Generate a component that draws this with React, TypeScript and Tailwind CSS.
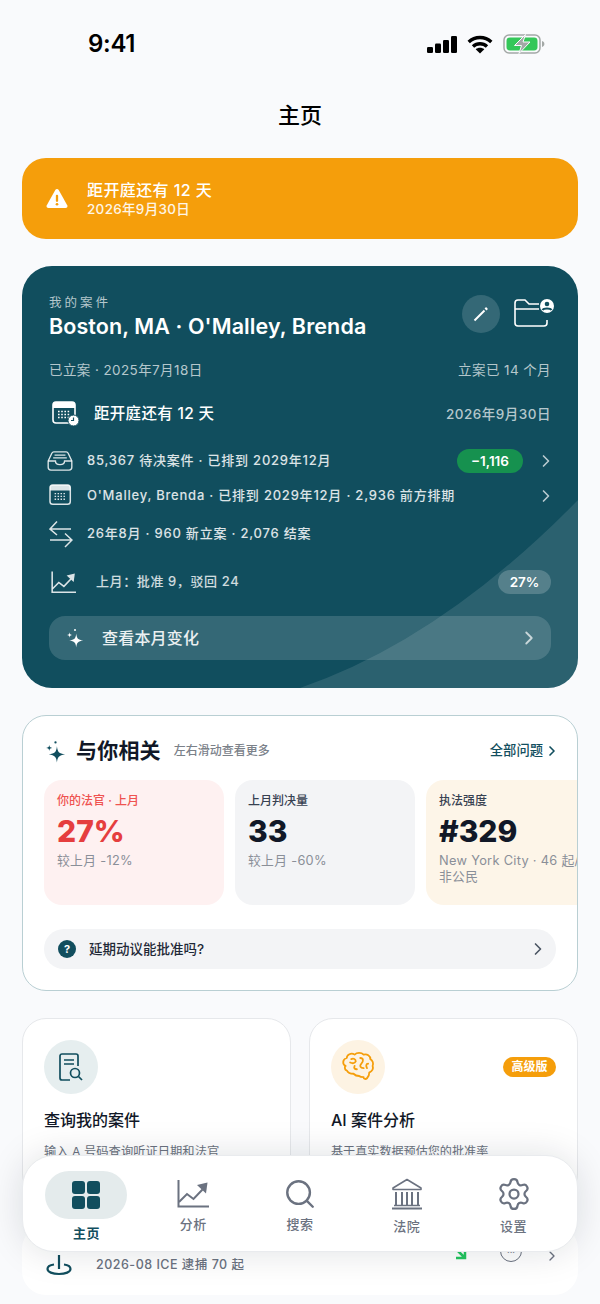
import React from "react";
import { ChevronRight, Search, Settings } from "lucide-react";

const Sparkle = ({ className }: { className?: string }) => (
  <svg viewBox="0 0 24 24" fill="currentColor" className={className}>
    <path d="M13.500 6.500C14.200 12.500 15.500 14.100 22 15 15.500 15.900 14.200 17.500 13.500 23.500 12.800 17.500 11.500 15.900 5 15 11.500 14.100 12.800 12.500 13.500 6.500Z" />
    <path d="M5.500 5c.3 2.400.8 3 3.300 3.300-2.500.3-3 .9-3.300 3.300-.3-2.400-.8-3-3.300-3.300 2.500-.3 3-.9 3.300-3.300Z" />
    <circle cx="12" cy="2.500" r="1.200" />
  </svg>
);

const TrendIcon = ({ className }: { className?: string }) => (
  <svg viewBox="0 0 32 28" fill="none" stroke="currentColor" strokeWidth="2" className={className}>
    <path d="M1.500 0v26.500H32" />
    <path d="M2 22l8-8 6.500 5 9-9.500" />
    <path d="M20 5l10.500-2.500L29 13.500Z" fill="currentColor" stroke="none" />
  </svg>
);

const CalendarIcon = ({ className, clock }: { className?: string; clock?: boolean }) => (
  <svg viewBox="0 0 28 26" fill="none" stroke="currentColor" className={className}>
    <rect x="1" y="1" width="22" height="21" rx="3" strokeWidth="1.600" />
    <path d="M1 4a3 3 0 0 1 3-3h16a3 3 0 0 1 3 3v3H1Z" fill="currentColor" stroke="none" />
    <path d="M6 10.500h12M6 13.500h12M6 16.500h12" strokeWidth="1.400" strokeDasharray="1.600 1.600" />
    {clock && <circle cx="21.500" cy="19.500" r="5.500" fill="currentColor" stroke="#134f5f" strokeWidth="1" />}
    {clock && <path d="M21.500 16.500v3h-2.500" stroke="#134f5f" strokeWidth="1.200" />}
  </svg>
);

const Row = ({ icon, text, right }: { icon: React.ReactNode; text: string; right?: React.ReactNode }) => (
  <div className="flex h-[24px] items-center">
    <div className="-ml-[3px] flex w-[41px] shrink-0">{icon}</div>
    <span className="text-[13px] font-medium tracking-[0.78px] text-white/85">{text}</span>
    {right && <div className="ml-auto flex items-center">{right}</div>}
  </div>
);

const Tile = ({
  bg,
  label,
  labelColor,
  value,
  valueColor,
  note,
}: {
  bg: string;
  label: string;
  labelColor: string;
  value: string;
  valueColor: string;
  note: React.ReactNode;
}) => (
  <div className={`h-[125px] w-[180px] shrink-0 rounded-[18px] px-[13px] pt-[13px] ${bg}`}>
    <div className={`text-[12px] font-medium leading-[16px] ${labelColor}`}>{label}</div>
    <div className={`mt-[3px] text-[30px] font-extrabold leading-[38px] ${valueColor}`}>{value}</div>
    <div className="mt-[3px] text-[12.800px] leading-[16px] tracking-[0.3px] text-[#8a8f98]">{note}</div>
  </div>
);

const NavItem = ({ icon, label, labelClass }: { icon: React.ReactNode; label: string; labelClass: string }) => (
  <div className="flex flex-1 flex-col items-center">
    <div className="flex h-[46px] items-center justify-center">{icon}</div>
    <span className={`text-[13px] font-medium leading-[16px] tracking-[0.5px] text-[#6b7280] ${labelClass}`}>{label}</span>
  </div>
);

export default function App() {
  return (
    <div className="relative h-[1304px] w-[600px] overflow-hidden bg-[#f9fafc] font-['Inter','Noto_Sans_CJK_SC',sans-serif] text-[#111827]">
      {/* status bar */}
      <div className="flex h-[88px] items-center justify-between pl-[88px] pr-[55px]">
        <span className="text-[24px] font-semibold tracking-[-0.3px] text-black">9:41</span>
        <div className="flex items-center gap-[10px]">
          <svg viewBox="0 0 30 17" className="h-[17px] w-[30px]" fill="black">
            <rect x="0" y="11" width="6" height="6" rx="1.300" />
            <rect x="8" y="7.500" width="6" height="9.500" rx="1.300" />
            <rect x="16" y="4" width="6" height="13" rx="1.300" />
            <rect x="24" y="0" width="6" height="17" rx="1.300" />
          </svg>
          <svg viewBox="0 0 26 19" className="h-[19px] w-[26px]" fill="none" stroke="black" strokeWidth="3.400">
            <path d="M1.700 7C8 1 18 1 24.300 7" />
            <path d="M6 11.500c4-3.700 10-3.700 14 0" />
            <path d="M13 18.500l4.300-4.200c-2.400-2-6.200-2-8.600 0Z" fill="black" stroke="none" />
          </svg>
          <svg viewBox="0 0 42 20" className="h-[20px] w-[42px]">
            <rect x="1" y="1" width="36" height="18" rx="5" fill="none" stroke="#a3a8a6" strokeWidth="1.500" />
            <rect x="3.500" y="3.500" width="31" height="13" rx="3.400" fill="#34c759" />
            <path d="M39 7v6c1.500-.4 2.400-1.600 2.400-3S40.500 7.400 39 7Z" fill="#a3a8a6" />
            <path d="M22.500 0.500L11.500 11.500h7L16 19.500l11-11.500h-7Z" fill="#a3a8a6" stroke="#f9fafc" strokeWidth="1" />
          </svg>
        </div>
      </div>

      <div className="flex h-[54px] items-center justify-center text-[22px] font-medium text-black">主页</div>

      <div className="mx-[22px] mt-[16px] flex h-[81px] items-center rounded-[24px] bg-[#f59e0b] pl-[23px] text-white">
        <svg viewBox="0 0 24 22" className="h-[21px] w-[24px]" fill="white">
          <path d="M12 1c.8 0 1.400.4 1.800 1.100l8.900 15.900c.8 1.500-.2 3-1.800 3H3.100c-1.600 0-2.600-1.500-1.800-3l8.900-15.900C10.600 1.400 11.200 1 12 1Z" />
          <rect x="10.800" y="7" width="2.400" height="7.500" rx="1" fill="#f59e0b" />
          <circle cx="12" cy="17" r="1.400" fill="#f59e0b" />
        </svg>
        <div className="ml-[18px]">
          <div className="text-[16px] font-medium leading-[20px] tracking-[0.4px]">距开庭还有 12 天</div>
          <div className="text-[13.500px] font-medium leading-[18px] tracking-[0.3px] text-white/90">2026年9月30日</div>
        </div>
      </div>

      {/* case card */}
      <div className="relative mx-[22px] mt-[27px] h-[422px] overflow-hidden rounded-[30px] bg-[#114e5e] px-[27px] text-white">
        <svg viewBox="0 0 556 422" className="absolute inset-0 h-full w-full">
          <path d="M278 422Q419 374 556 234V422Z" fill="white" fillOpacity="0.11" />
        </svg>
        <div className="relative">
          <div className="flex h-[75px] items-end justify-between">
            <div>
              <div className="text-[12.500px] leading-[16px] tracking-[3px] text-white/70">我的案件</div>
              <div className="text-[21.500px] font-semibold leading-[30px] tracking-[0.1px]">Boston, MA · O'Malley, Brenda</div>
            </div>
            <div className="mb-[8px] flex items-start">
              <div className="flex h-[38px] w-[38px] items-center justify-center rounded-full bg-white/15">
                <svg viewBox="0 0 16 16" className="h-[16px] w-[16px]" fill="none" stroke="white" strokeWidth="2">
                  <path d="M1.500 14.500l10-10" />
                  <path d="M12.500 3.500l1.500-1.500" strokeWidth="2.600" />
                </svg>
              </div>
              <svg viewBox="0 0 40 28" fill="none" stroke="white" strokeWidth="1.600" className="-mr-[3px] ml-[14px] mt-[4px] h-[28px] w-[40px]">
                <path d="M33 21v3a3 3 0 0 1-3 3H4a3 3 0 0 1-3-3V4a3 3 0 0 1 3-3h7l4 4h10" />
                <path d="M1 10h24" />
                <circle cx="33" cy="7" r="7" fill="white" stroke="none" />
                <circle cx="33" cy="5" r="2.300" fill="#114e5e" stroke="none" />
                <path d="M28.500 11c1-2 8-2 9 0" stroke="#114e5e" strokeWidth="2" />
              </svg>
            </div>
          </div>

          <div className="mt-[19px] flex h-[20px] items-center justify-between text-[13.500px] tracking-[0.4px] text-white/70">
            <span>已立案 · 2025年7月18日</span>
            <span>立案已 14 个月</span>
          </div>

          <div className="mt-[21px] flex h-[26px] items-center">
            <CalendarIcon clock className="ml-[3px] h-[26px] w-[28px]" />
            <span className="ml-[14px] text-[15.500px] font-medium tracking-[0.3px]">距开庭还有 12 天</span>
            <span className="ml-auto text-[13.500px] font-medium tracking-[0.5px] text-white/70">2026年9月30日</span>
          </div>

          <div className="mt-[22px] flex flex-col gap-[11px]">
            <Row
              icon={
                <svg viewBox="0 0 28 22" fill="none" stroke="white" strokeOpacity="0.85" strokeWidth="1.500" className="h-[20px] w-[28px]">
                  <path d="M1 11l4-8.500C5.500 1.500 6.200 1 7.200 1h13.600c1 0 1.700.5 2.200 1.500L27 11v7a3 3 0 0 1-3 3H4a3 3 0 0 1-3-3Z" />
                  <path d="M1 11h8c0 2.500 2 4 5 4s5-1.500 5-4h8M8 4.500h12M6.500 7.500h15" />
                </svg>
              }
              text="85,367 待决案件 · 已排到 2029年12月"
              right={
                <>
                  <span className="flex h-[24px] w-[66px] items-center justify-center rounded-full bg-[#16914f] text-[13.500px] font-semibold">−1,116</span>
                  <ChevronRight className="ml-[13px] mr-[-5px] h-[20px] w-[20px] text-white/70" />
                </>
              }
            />
            <Row
              icon={<CalendarIcon className="ml-[3px] h-[24px] w-[26px] text-white/85" />}
              text="O'Malley, Brenda · 已排到 2029年12月 · 2,936 前方排期"
              right={<ChevronRight className="mr-[-5px] h-[20px] w-[20px] text-white/70" />}
            />
            <div className="mt-[3px]">
              <Row
                icon={
                  <svg viewBox="0 0 24 28" fill="none" stroke="white" strokeOpacity="0.85" strokeWidth="1.500" className="ml-[3px] h-[28px] w-[24px]">
                    <path d="M1 9h21M8 1.500L1 9l7 6" />
                    <path d="M23 20H1M16 13.500L23 20l-7 7" />
                  </svg>
                }
                text="26年8月 · 960 新立案 · 2,076 结案"
              />
            </div>
          </div>

          <div className="mt-[24px] flex h-[24px] items-center">
            <TrendIcon className="ml-[2px] h-[23px] w-[25px] text-white/85" />
            <span className="ml-[20px] text-[13px] font-medium tracking-[0.6px] text-white/80">上月：批准 9，驳回 24</span>
            <span className="ml-auto flex h-[24px] w-[53px] items-center justify-center rounded-full bg-white/20 text-[13.500px] font-semibold">27%</span>
          </div>

          <div className="mt-[22px] flex h-[44px] items-center rounded-[16px] bg-white/15 pl-[16px] pr-[11px]">
            <Sparkle className="h-[20px] w-[20px]" />
            <span className="ml-[17px] text-[16px] font-medium tracking-[0.2px] text-white/90">查看本月变化</span>
            <ChevronRight className="ml-auto h-[22px] w-[22px] text-white/70" />
          </div>
        </div>
      </div>

      {/* related */}
      <div className="mx-[22px] mt-[27px] h-[276px] overflow-hidden rounded-[24px] border border-[#b9cfd3] bg-white pl-[21px]">
        <div className="flex h-[64px] items-center pr-[21px] pt-[6px]">
          <Sparkle className="h-[23px] w-[23px] text-[#114e5e]" />
          <span className="ml-[9px] text-[21px] font-semibold tracking-[0.2px] text-[#111827]">与你相关</span>
          <span className="ml-[13px] text-[12px] font-medium text-[#7b8189]">左右滑动查看更多</span>
          <span className="ml-auto text-[13.300px] font-medium text-[#114e5e]">全部问题</span>
          <ChevronRight className="ml-[1px] mr-[-4px] h-[16px] w-[16px] text-[#114e5e]" strokeWidth={2.500} />
        </div>
        <div className="flex gap-[11px]">
          <Tile bg="bg-[#fef1f1]" label="你的法官 · 上月" labelColor="text-[#ef5350]" value="27%" valueColor="text-[#e53e3e]" note="较上月 -12%" />
          <Tile bg="bg-[#f3f4f6]" label="上月判决量" labelColor="text-[#374151]" value="33" valueColor="text-[#111827]" note="较上月 -60%" />
          <Tile
            bg="bg-[#fdf5e8]"
            label="执法强度"
            labelColor="text-[#374151]"
            value="#329"
            valueColor="text-[#111827]"
            note={
              <>
                <span className="block whitespace-nowrap">New York City · 46 起/周</span>
                <span className="block">非公民</span>
              </>
            }
          />
        </div>
        <div className="mr-[21px] mt-[24px] flex h-[40px] items-center rounded-full bg-[#f3f4f6] pl-[14px] pr-[8px]">
          <span className="flex h-[18px] w-[18px] items-center justify-center rounded-full bg-[#114e5e] text-[11px] font-bold text-white">?</span>
          <span className="ml-[13px] text-[13.500px] font-medium text-[#1f2937]">延期动议能批准吗?</span>
          <ChevronRight className="ml-auto h-[20px] w-[20px] text-[#4b5563]" />
        </div>
      </div>

      {/* feature cards */}
      <div className="mx-[22px] mt-[27px] grid grid-cols-2 gap-[18px]">
        <div className="h-[180px] rounded-[24px] border border-[#e6e8eb] bg-white px-[21px] pt-[21px]">
          <div className="flex h-[54px] w-[54px] items-center justify-center rounded-full bg-[#e6eeef]">
            <svg viewBox="0 0 24 28" fill="none" stroke="#114e5e" strokeWidth="1.700" className="h-[28px] w-[24px]">
              <path d="M19 13V3a2 2 0 0 0-2-2H3a2 2 0 0 0-2 2v22a2 2 0 0 0 2 2h8" />
              <path d="M5 7h10M5 11h10" />
              <circle cx="16" cy="20" r="4.500" />
              <path d="M19.500 23.500L23 27" />
            </svg>
          </div>
          <div className="mt-[15px] text-[16px] font-medium leading-[22px] text-[#111827]">查询我的案件</div>
          <div className="mt-[12px] text-[12.300px] leading-[18px] text-[#6b7280]">输入 A 号码查询听证日期和法官</div>
        </div>
        <div className="h-[180px] rounded-[24px] border border-[#e6e8eb] bg-white px-[21px] pt-[21px]">
          <div className="flex items-center justify-between">
            <div className="flex h-[54px] w-[54px] items-center justify-center rounded-full bg-[#fdf3e3]">
              <svg viewBox="0 0 32 32" fill="none" stroke="#f59e0b" strokeWidth="1.600" strokeLinecap="round" strokeLinejoin="round" className="h-[36px] w-[36px]">
                <path d="M5 15c-3-1-3-6 1-7 0-3 4-5 7-3 2-2 6-2 8 0 3-1 6 1 6 4 2 1 3 4 2 6 1 3-1 5-3 6 0 2-1 4-2 5-1 1-3 1-3-1-1 0-3 0-4-1-2 0-4-1-5-2-3 0-5-1-6-3-2 0-2-4-1-4Z" />
                <path d="M10 9c2-1 4 0 4 2-1 2-3 2-5 1M18 8c3 0 3 3 1 5-2 2-1 4 2 4M13 15c-1 2 0 3 2 3M25 13c-2 0-2 2-1 4" />
              </svg>
            </div>
            <span className="flex h-[20px] w-[53px] items-center justify-center rounded-full bg-[#f59e0b] text-[12px] font-semibold text-white">高级版</span>
          </div>
          <div className="mt-[15px] text-[16px] font-medium leading-[22px] text-[#111827]">AI 案件分析</div>
          <div className="mt-[12px] text-[12.100px] leading-[18px] text-[#6b7280]">基于真实数据预估您的批准率</div>
        </div>
      </div>

      {/* card under the tab bar */}
      <div className="mx-[22px] mt-[27px] flex h-[70px] items-center rounded-[24px] bg-white pl-[24px] pr-[18px] pt-[10px]">
        <svg viewBox="0 0 26 22" fill="none" stroke="#114e5e" strokeWidth="2.200" className="h-[22px] w-[26px]">
          <path d="M13 1v14" />
          <path d="M8 10.500C4 11 1.500 12.500 1.500 15c0 3 5 5 11.500 5s11.500-2 11.500-5c0-2.500-2.500-4-6.500-4.500" />
        </svg>
        <span className="ml-[24px] text-[12.500px] font-medium tracking-[0.5px] text-[#6b7280]">2026-08 ICE 逮捕 70 起</span>
        <svg viewBox="0 0 14 14" fill="none" stroke="#22c55e" strokeWidth="2.500" className="mb-[24px] ml-auto h-[14px] w-[14px]">
          <path d="M1 1l11 11M12 3v9H3" />
        </svg>
        <span className="mb-[28px] ml-[33px] flex h-[22px] w-[22px] items-end justify-center rounded-full border-[1.500px] border-[#6b7280] pb-[5px] text-[8px] font-bold leading-[8px] text-[#6b7280]">···</span>
        <ChevronRight className="mb-[18px] ml-[22px] h-[16px] w-[16px] text-[#6b7280]" />
      </div>

      {/* tab bar */}
      <div className="absolute left-[22px] top-[1155px] flex h-[97px] w-[556px] items-start rounded-[32px] border border-[#e9ebee] bg-white px-[10px] pt-[15px] shadow-[0_0_36px_rgba(17,24,39,0.13)]">
        <div className="flex flex-1 flex-col items-center">
          <div className="flex h-[48px] w-[82px] items-center justify-center rounded-full bg-[#e4ebec]">
            <div className="grid grid-cols-2 gap-[2px]">
              <span className="h-[13px] w-[13px] rounded-[3px] bg-[#114e5e]" />
              <span className="h-[13px] w-[13px] rounded-[3px] bg-[#114e5e]" />
              <span className="h-[13px] w-[13px] rounded-[3px] bg-[#114e5e]" />
              <span className="h-[13px] w-[13px] rounded-[3px] bg-[#114e5e]" />
            </div>
          </div>
          <span className="mt-[6px] text-[13px] font-semibold leading-[16px] tracking-[0.5px] text-[#114e5e]">主页</span>
        </div>
        <NavItem labelClass="-mt-[1px]" label="分析" icon={<TrendIcon className="h-[28px] w-[32px] text-[#6b7280]" />} />
        <NavItem labelClass="-mt-[1px]" label="搜索" icon={<Search className="h-[34px] w-[34px] text-[#6b7280]" strokeWidth={1.700} />} />
        <NavItem
          labelClass="mt-[1px]"
          label="法院"
          icon={
            <svg viewBox="0 0 32 32" fill="none" stroke="#6b7280" className="h-[32px] w-[32px]">
              <path d="M16 1.500L2 10v1.500h28V10Z" strokeWidth="1.600" strokeLinejoin="round" />
              <path d="M5 14v13M11 14v13M16 14v13M21 14v13M27 14v13" strokeWidth="2" />
              <path d="M3 27.500h26" strokeWidth="1.500" />
              <path d="M1 30.500h30" strokeWidth="2" />
            </svg>
          }
        />
        <NavItem labelClass="mt-[1px]" label="设置" icon={<Settings className="h-[36px] w-[36px] text-[#6b7280]" strokeWidth={1.500} />} />
      </div>
    </div>
  );
}
